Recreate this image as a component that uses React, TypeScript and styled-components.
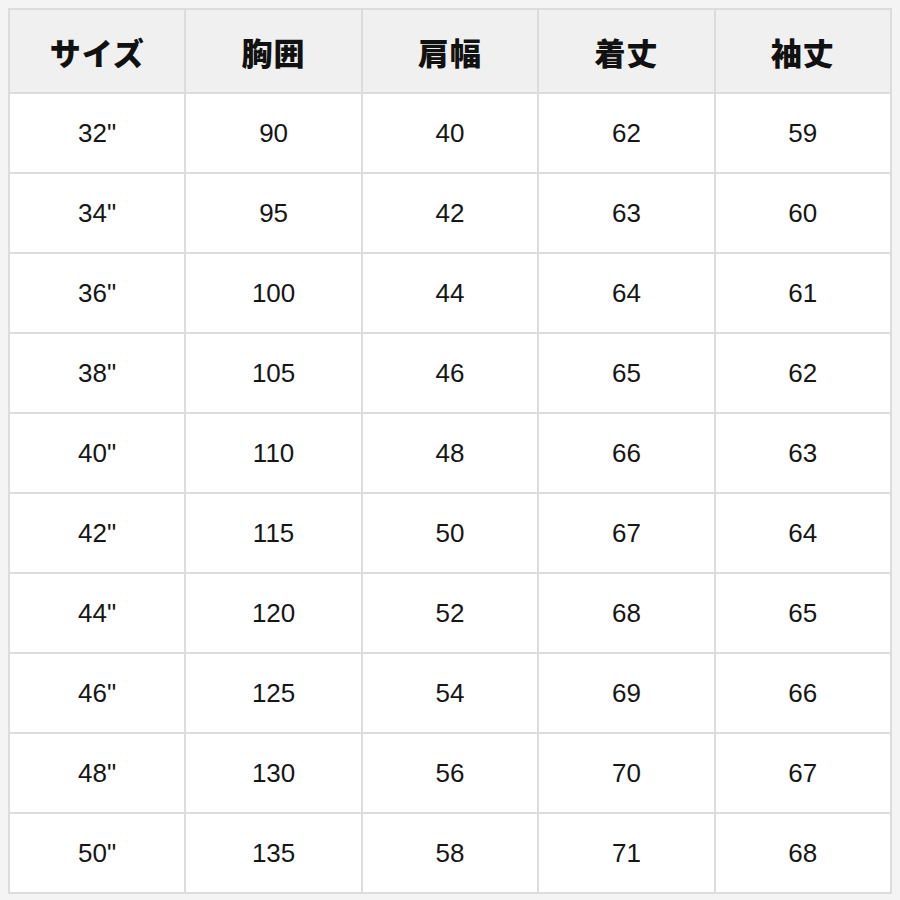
import React from "react";
import styled, { createGlobalStyle } from "styled-components";

const Global = createGlobalStyle`
  html, body { margin: 0; padding: 0; background: #f4f4f4; }
  body { font-family: "Liberation Sans", Arial, "Noto Sans CJK JP", sans-serif; }
`;

const Page = styled.div`
  padding: 8px;
`;

const Grid = styled.div`
  display: grid;
  grid-template-columns: repeat(5, 1fr);
  grid-template-rows: 82px repeat(10, 78px);
  gap: 2px;
  padding: 2px;
  width: 884px;
  box-sizing: border-box;
  background: #dcdcdc;
`;

const HeadCell = styled.div`
  background: #f0f0f0;
  display: flex;
  align-items: center;
  justify-content: center;
  font-family: "Noto Sans CJK JP", "Noto Sans", sans-serif;
  font-weight: 900;
  font-size: 31px;
  color: #111;
  letter-spacing: 1px;
`;

const Cell = styled.div`
  background: #fff;
  display: flex;
  align-items: center;
  justify-content: center;
  font-family: "Liberation Sans", Arial, sans-serif;
  font-size: 26px;
  color: #161616;
`;

const headers = ["サイズ", "胸囲", "肩幅", "着丈", "袖丈"];
const rows: string[][] = [
  ['32"', "90", "40", "62", "59"],
  ['34"', "95", "42", "63", "60"],
  ['36"', "100", "44", "64", "61"],
  ['38"', "105", "46", "65", "62"],
  ['40"', "110", "48", "66", "63"],
  ['42"', "115", "50", "67", "64"],
  ['44"', "120", "52", "68", "65"],
  ['46"', "125", "54", "69", "66"],
  ['48"', "130", "56", "70", "67"],
  ['50"', "135", "58", "71", "68"],
];

export default function App() {
  return (
    <Page>
      <Global />
      <Grid>
        {headers.map((h) => (
          <HeadCell key={h}>{h}</HeadCell>
        ))}
        {rows.map((r, i) =>
          r.map((v, j) => <Cell key={`${i}-${j}`}>{v}</Cell>)
        )}
      </Grid>
    </Page>
  );
}
